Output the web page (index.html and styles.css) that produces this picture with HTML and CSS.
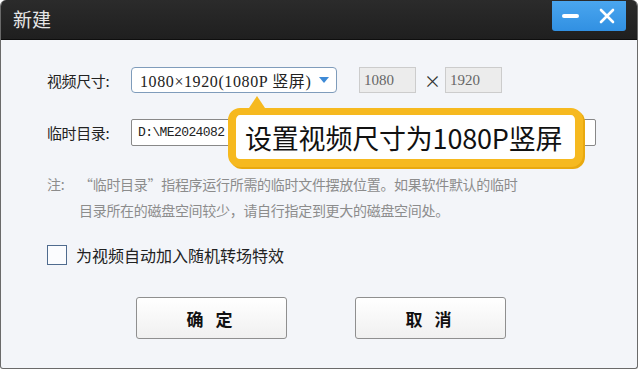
FILE: index.html
```html
<!DOCTYPE html>
<html lang="zh-CN">
<head>
  <meta charset="UTF-8">
  <meta name="viewport" content="width=device-width, initial-scale=1.0">
  <title>新建</title>
  <link rel="stylesheet" href="styles.css">
</head>
<body>

  <div class="window">
    <div class="titlebar">
      <span class="title">新建</span>
      <div class="win-buttons">
        <span class="win-min"></span>
        <svg class="win-close" width="16" height="16" viewBox="0 0 16 16">
          <path d="M2 2 L14 14 M14 2 L2 14" stroke="#ffffff" stroke-width="2.6" stroke-linecap="round"/>
        </svg>
      </div>
    </div>

    <div class="content">
      <div class="row">
        <span class="row-label">视频尺寸:</span>
        <div class="select">
          <span>1080×1920(1080P 竖屏)</span>
          <span class="select-arrow"></span>
        </div>
        <div class="size-box">1080</div>
        <span class="times">×</span>
        <div class="size-box">1920</div>
      </div>

      <div class="row row-dir">
        <span class="row-label">临时目录:</span>
        <div class="dir-input">D:\ME2024082</div>
        <div class="tip">设置视频尺寸为1080P竖屏</div>
      </div>

      <div class="note">
        <span class="note-head">注:</span>
        <span class="note-body">“临时目录”指程序运行所需的临时文件摆放位置。如果软件默认的临时<br>目录所在的磁盘空间较少，请自行指定到更大的磁盘空间处。</span>
      </div>

      <label class="check">
        <span class="check-box"></span>
        <span>为视频自动加入随机转场特效</span>
      </label>

      <div class="actions">
        <button class="btn">确 定</button>
        <button class="btn">取 消</button>
      </div>
    </div>
  </div>

</body>
</html>
```

FILE: styles.css
```css
body {
  margin: 0;
  width: 640px;
  height: 370px;
  overflow: hidden;
  background-color: #ffffff;
  font-family: "Noto Sans CJK SC", "Liberation Sans", sans-serif;
}

.window {
  width: 638px;
  height: 369px;
  display: flex;
  flex-direction: column;
  border: 1px solid #6a6a6a;
  border-top: none;
  border-radius: 6px 6px 3px 3px;
  overflow: hidden;
  box-sizing: border-box;
  background-color: #f3f5f9;
}

.titlebar {
  height: 40px;
  flex-shrink: 0;
  display: flex;
  justify-content: space-between;
  align-items: flex-start;
  background: linear-gradient(#2b2b2b, #1f1f1f);
  border-bottom: 1px solid #0e0e0e;
  box-sizing: border-box;
}

.title {
  margin: 6px 0 0 12px;
  color: #e6e6e6;
  font-size: 19px;
  line-height: 26px;
}

.win-buttons {
  width: 74px;
  height: 30px;
  margin: 1px 11px 0 0;
  display: flex;
  align-items: center;
  justify-content: space-between;
  padding: 0 11px 0 10px;
  box-sizing: border-box;
  background: linear-gradient(#4aa6ef, #3190e2);
  border-radius: 0 0 3px 3px;
}

.win-min {
  width: 17px;
  height: 4px;
  border-radius: 2px;
  background-color: #ffffff;
}

.content {
  flex: 1;
  padding: 27px 0 0 46px;
  position: relative;
}

.row {
  display: flex;
  align-items: center;
  height: 26px;
  font-size: 15px;
  color: #222222;
}

.row-label {
  width: 84px;
  letter-spacing: -0.4px;
}

.select {
  width: 206px;
  height: 26px;
  display: flex;
  align-items: center;
  justify-content: space-between;
  padding: 0 7px 0 8px;
  box-sizing: border-box;
  border: 1px solid #7f9cbb;
  border-radius: 4px;
  background-color: #ffffff;
  font-family: "Liberation Serif", "Noto Sans CJK SC", serif;
  font-size: 16px;
  letter-spacing: 0.6px;
}

.select-arrow {
  width: 0;
  height: 0;
  border-left: 5px solid transparent;
  border-right: 5px solid transparent;
  border-top: 6px solid #3e8ad6;
}

.size-box {
  width: 57px;
  height: 26px;
  margin-left: 22px;
  padding-left: 4px;
  box-sizing: border-box;
  border: 1px solid #cccccc;
  background-color: #ececec;
  color: #666666;
  font-family: "Liberation Serif", serif;
  font-size: 15px;
  line-height: 24px;
}

.times {
  margin-left: 8px;
  font-size: 17px;
  color: #333333;
}

.times + .size-box {
  margin-left: 4px;
}

.row-dir {
  margin-top: 26px;
  height: 27px;
}

.dir-input {
  width: 465px;
  height: 27px;
  padding-left: 6px;
  box-sizing: border-box;
  border: 1px solid #888888;
  border-radius: 2px;
  background-color: #ffffff;
  font-family: "Liberation Mono", monospace;
  font-size: 13px;
  line-height: 25px;
  color: #222222;
  letter-spacing: -0.6px;
}

.tip {
  position: absolute;
  left: 227px;
  top: 68px;
  width: 355px;
  height: 59px;
  display: flex;
  align-items: center;
  padding-left: 9px;
  box-sizing: border-box;
  border: 8px solid #f6b91f;
  border-top-width: 7px;
  border-radius: 12px;
  background-color: #ffffff;
  box-shadow: 2px 2px 0 #e9a90f;
  font-size: 27px;
  font-weight: 400;
  color: #111111;
  letter-spacing: -0.2px;
}

.tip::before {
  content: "";
  position: absolute;
  left: 13px;
  top: -19px;
  width: 0;
  height: 0;
  border-left: 8px solid transparent;
  border-right: 8px solid transparent;
  border-bottom: 12px solid #f6b91f;
}

.note {
  display: flex;
  margin-top: 25px;
  font-size: 14px;
  line-height: 26px;
  color: #8c8c8c;
  letter-spacing: -0.3px;
}

.note-head {
  width: 32px;
}

.note-body {
  white-space: nowrap;
}

.check {
  display: flex;
  align-items: center;
  margin-top: 20px;
  font-size: 16px;
  color: #222222;
}

.check-box {
  width: 20px;
  height: 20px;
  margin-right: 9px;
  box-sizing: border-box;
  border: 1px solid #4f6b8e;
  background-color: #fbfcfe;
}

.actions {
  display: flex;
  margin: 30px 0 0 89px;
  gap: 68px;
}

.btn {
  width: 151px;
  height: 42px;
  border: 1px solid #8f8f8f;
  border-radius: 3px;
  background: linear-gradient(#ffffff, #f0f0f0);
  font-family: "Noto Sans CJK SC", sans-serif;
  font-size: 17px;
  font-weight: bold;
  color: #111111;
  letter-spacing: 4px;
}
```
